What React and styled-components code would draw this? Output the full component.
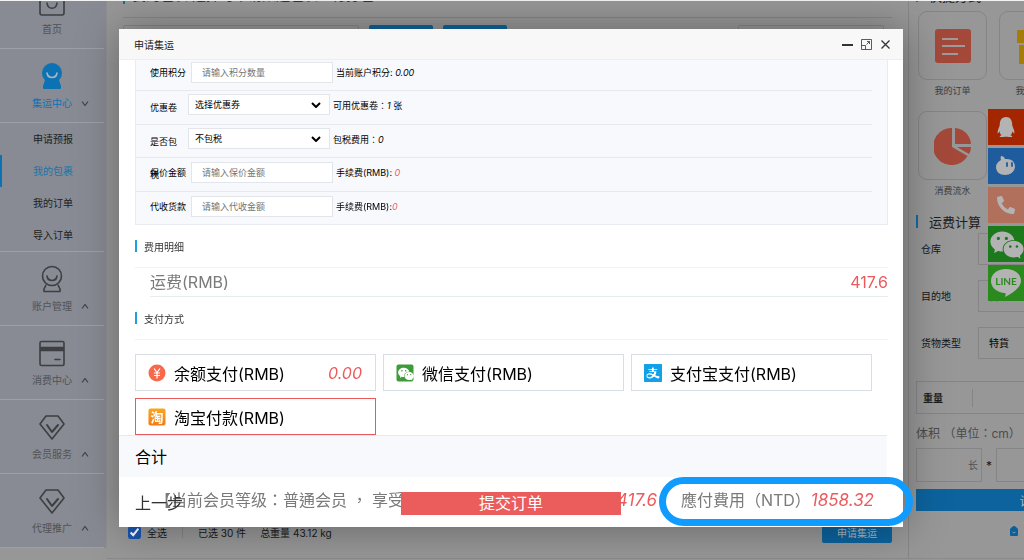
import React from "react";
import styled, { createGlobalStyle } from "styled-components";
import { FaQq, FaPhoneAlt } from "react-icons/fa";
import { AiFillAlipaySquare, AiFillWechat } from "react-icons/ai";

const FONT = `Inter, "Noto Sans CJK SC", sans-serif`;
const FONT_TC = `Inter, "Noto Sans CJK TC", "Noto Sans CJK SC", sans-serif`;

const Global = createGlobalStyle`
  *, *::before, *::after { box-sizing: border-box; }
  body { margin: 0; background: #fff; font-family: ${FONT}; font-size: 10px; color: #222; }
  button, input, select { font-family: inherit; margin: 0; }
  button { border: 0; padding: 0; background: none; cursor: pointer; }
  a { color: inherit; text-decoration: none; }
  ul { list-style: none; margin: 0; padding: 0; }
  h1, h2, h3, p { margin: 0; font-weight: 400; }
`;

const Page = styled.div`
  display: flex;
  height: 100vh;
  overflow: hidden;
  border-top: 1px solid #f2f2f2;
  background: #979797;
`;

/* ---------- sidebar ---------- */

const Sidebar = styled.nav`
  flex: 0 0 107px;
  align-self: flex-start;
  padding-right: 2px;
  background: #888b93;
  border-right: 1px solid #8f9197;
`;

const MenuItem = styled.a`
  display: flex;
  flex-direction: column;
  align-items: center;
  justify-content: flex-end;
  gap: 5px;
  height: ${(p) => (p.$cut ? 48 : 74)}px;
  padding-bottom: 11px;
  overflow: hidden;
  border-bottom: 1px solid #9da0a6;
  color: ${(p) => (p.$active ? "#0d72b3" : "#505256")};
  line-height: 16px;
`;

const MenuIcon = styled.svg`
  flex: none;
  width: 28px;
  height: 28px;
  fill: none;
  stroke: #3d3f42;
  stroke-width: 1.6;
  stroke-linejoin: round;
  stroke-linecap: round;
`;

const MenuLabel = styled.span`
  position: relative;
`;

const Caret = styled.svg`
  position: absolute;
  top: 6px;
  left: 49px;
  width: 8px;
  height: 5px;
  fill: none;
  stroke: #404246;
  stroke-width: 1.2;
`;

const SubMenu = styled.ul`
  border-bottom: 1px solid #9da0a6;
`;

const SubItem = styled.li`
  height: 32px;
  line-height: 32px;
  text-align: center;
  border-left: 2px solid ${(p) => (p.$active ? "#0d72b3" : "transparent")};
  color: ${(p) => (p.$active ? "#2274ad" : "#1c1d20")};
`;

/* ---------- page behind the dialog ---------- */

const Main = styled.main`
  flex: 1;
  min-width: 0;
  display: flex;
  flex-direction: column;
  margin-bottom: 1px;
  border-bottom: 1px solid #8b8b8b;
`;

const MainTitle = styled.h1`
  display: flex;
  gap: 7px;
  height: 17px;
  margin: 0 16px;
  border-bottom: 1px solid #868686;
  font-size: 14px;
  color: #333;
  overflow: hidden;
  &::before {
    content: "";
    width: 2px;
    height: 3px;
    background: #0d6ca8;
  }
  span {
    margin-top: -15px;
    line-height: 18px;
  }
`;

const Filters = styled.div`
  display: flex;
  align-items: flex-start;
  gap: 10px;
  padding: 7px 24px 0 16px;
`;

const Field = styled.input`
  width: ${(p) => p.$w}px;
  height: 26px;
  border: 1px solid #858585;
  border-radius: 2px;
  background: transparent;
  margin-left: ${(p) => (p.$end ? "auto" : 0)};
`;

const BlueButton = styled.button`
  flex: none;
  width: ${(p) => p.$w}px;
  height: ${(p) => p.$h}px;
  border-radius: 2px;
  background: #0c639d;
  color: #a9b8c2;
  font-size: 10px;
`;

const MainFooter = styled.div`
  display: flex;
  align-items: center;
  height: 52px;
  margin-top: auto;
  padding: 0 16px 0 21px;
  color: #17181a;
  font-size: 10px;
  label { display: flex; align-items: center; gap: 6px; }
  input { width: 13px; height: 13px; accent-color: #1a56b0; }
  button { margin-left: auto; }
`;

const Divider = styled.i`
  width: 1px;
  height: ${(p) => p.$h}px;
  margin: 0 15px;
  background: #858585;
`;

const Weight = styled.span`
  margin-left: 14px;
`;

/* ---------- right panel ---------- */

const Aside = styled.aside`
  flex: 0 0 116px;
  overflow: hidden;
  border-left: 1px solid #868686;
  margin-bottom: 1px;
  border-bottom: 1px solid #8b8b8b;
`;

const AsideInner = styled.div`
  width: 238px;
  padding-left: 7px;
`;

const AsideTitle = styled.h2`
  display: flex;
  align-items: center;
  gap: 11px;
  height: 20px;
  margin-top: ${(p) => (p.$cut ? -16 : 8)}px;
  font-size: 13px;
  color: #1d1e20;
  &::before {
    content: "";
    width: 2px;
    height: 13px;
    background: #0d6ca8;
  }
`;

const Shortcuts = styled.div`
  display: grid;
  grid-template-columns: 69px 69px;
  column-gap: 12px;
  row-gap: 8px;
  padding: 6px 0 0 2px;
`;

const Shortcut = styled.a`
  display: flex;
  flex-direction: column;
  align-items: center;
  gap: 2px;
  height: 92px;
  font-size: 9px;
  line-height: 18px;
  color: #3b3c3e;
`;

const ShortcutBox = styled.span`
  display: grid;
  place-items: center;
  width: 69px;
  height: 69px;
  border: 1px solid #858585;
  border-radius: 9px;
  svg { width: 38px; height: 38px; }
`;

const CalcForm = styled.div`
  padding-top: 2px;
`;

const CalcRow = styled.label`
  display: flex;
  align-items: center;
  justify-content: space-between;
  height: 31px;
  margin-bottom: 16px;
  padding-left: 5px;
  color: #141516;
`;

const CalcSelect = styled.select`
  appearance: none;
  width: 169px;
  height: 32px;
  padding: 0 10px;
  border: 1px solid #858585;
  border-radius: 0;
  background: transparent;
  font-size: 10px;
  font-weight: 500;
  color: #141516;
`;

const WeightBox = styled.label`
  display: flex;
  align-items: center;
  height: 33px;
  margin-top: 23px;
  padding-left: 6px;
  border: 1px solid #858585;
  font-weight: 700;
  color: #1d1e20;
  input { flex: 1; min-width: 0; border: 0; background: transparent; }
  i { margin: 0 0 0 29px; }
`;

const VolumeTitle = styled.h3`
  height: 34px;
  line-height: 40px;
  font-family: ${FONT_TC};
  font-size: 12px;
  color: #4a4b4d;
  white-space: nowrap;
`;

const Sizes = styled.div`
  display: flex;
  align-items: center;
  gap: 4px;
  color: #17181a;
  font-size: 12px;
`;

const SizeField = styled.input`
  width: 66px;
  height: 34px;
  padding: 0 3px;
  border: 1px solid #858585;
  background: transparent;
  text-align: right;
  font-size: 10px;
  &::placeholder { color: #505153; }
`;

const CalcButton = styled(BlueButton)`
  display: block;
  width: 100%;
  margin-top: 7px;
  border-radius: 0;
  font-size: 12px;
`;

const BagLine = styled.div`
  padding: 15px 0 0 94px;
  svg { display: block; width: 8px; height: 10px; }
`;

const Social = styled.div`
  position: fixed;
  top: 109px;
  right: 0;
  display: grid;
  gap: 3px;
`;

const SocialLink = styled.a`
  display: grid;
  place-items: center;
  width: 36px;
  height: 36px;
  background: ${(p) => p.$bg};
  color: #b3b3b3;
  overflow: hidden;
`;

/* ---------- dialog ---------- */

const Dialog = styled.section`
  position: fixed;
  inset: 29px 121px 33px 119px;
  display: flex;
  flex-direction: column;
  background: #fff;
  box-shadow: 1px 1px 40px rgba(0, 0, 0, 0.35);
`;

const DialogHead = styled.header`
  flex: none;
  display: flex;
  align-items: center;
  gap: 8px;
  height: 31px;
  padding: 0 12px 0 15px;
  background: #f8f8f8;
  border-bottom: 1px solid #eee;
  h2 { margin-right: auto; font-size: 10px; color: #222; }
  button { display: grid; width: 11px; height: 11px; }
  svg { width: 11px; height: 11px; fill: none; stroke: #333; }
`;

const DialogBody = styled.div`
  flex: 1;
  min-height: 0;
  overflow: hidden;
  padding: 0 15px 0 16px;
`;

const Options = styled.div`
  display: flex;
  flex-direction: column;
  height: 168px;
  margin-top: -3px;
  padding-right: 15px;
  background: #f7f9fd;
  border: 1px solid #e8ecf2;
`;

const OptionRow = styled.div`
  flex: 1;
  display: flex;
  align-items: flex-start;
  min-height: 0;
  padding-left: 14px;
  border-bottom: ${(p) => (p.$last ? 0 : 1)}px solid #e6e9ee;
  font-size: 9px;
  color: #000;
`;

const OptionLabel = styled.label`
  flex: none;
  width: ${(p) => (p.$narrow ? 35 : 38)}px;
  margin-right: 3px;
  line-height: ${(p) => (p.$narrow ? 33 : 29)}px;
  white-space: ${(p) => (p.$narrow ? "normal" : "nowrap")};
`;

const TextField = styled.input`
  width: 142px;
  height: 21px;
  margin-top: 4px;
  padding: 0 10px;
  border: 1px solid #e2e5ea;
  background: #fff;
  font-size: 9px;
  &::placeholder { color: #757575; opacity: 1; }
`;

const SelectWrap = styled.span`
  position: relative;
  margin-top: 3px;
  select {
    display: block;
    appearance: none;
    width: 142px;
    height: 21px;
    padding: 0 6px;
    border: 1px solid #e2e5ea;
    border-radius: 0;
    background: #fff;
    font-size: 9px;
    color: #000;
  }
  svg {
    position: absolute;
    top: 8px;
    right: 9px;
    width: 10px;
    height: 6px;
    fill: none;
    stroke: #000;
    stroke-width: 2;
    pointer-events: none;
  }
`;

const Note = styled.span`
  margin-left: 3px;
  font-family: ${FONT_TC};
  line-height: 29px;
  em { color: ${(p) => (p.$red ? "#f0595c" : "inherit")}; }
`;

const SectionTitle = styled.h3`
  display: flex;
  align-items: center;
  gap: 7px;
  height: 43px;
  border-bottom: 1px solid #f0f2f4;
  font-size: 10px;
  color: #333;
  &::before {
    content: "";
    width: 2px;
    height: 12px;
    background: #1e9fdf;
  }
`;

const FeeRow = styled.div`
  display: flex;
  justify-content: space-between;
  height: 29px;
  margin-left: 15px;
  border-bottom: 1px solid #e8eef0;
  font-size: 16px;
  line-height: 28px;
  color: #7a7a7a;
  strong { font-weight: 400; color: #ec5a5d; }
`;

const PayGrid = styled.div`
  display: grid;
  grid-template-columns: repeat(3, 1fr);
  gap: 7px;
  padding: 14px 16px 0 0;
`;

const PayOption = styled.label`
  display: flex;
  align-items: center;
  gap: 8px;
  height: 37px;
  padding: 0 13px 0 12px;
  border: 1px solid ${(p) => (p.$on ? "#e8595c" : "#d9dee6")};
  font-size: 16px;
  color: #000;
  svg { flex: none; width: 18px; height: 18px; }
  input { position: absolute; opacity: 0; pointer-events: none; }
  em { margin-left: auto; color: #ec5a5d; }
`;

const TotalBar = styled.div`
  flex: none;
  height: 42px;
  margin-right: 16px;
  padding-left: 16px;
  border-top: 1px solid #e6eaef;
  background: #f7f9fc;
  font-size: 16px;
  line-height: 42px;
  color: #000;
`;

const Actions = styled.footer`
  flex: none;
  position: relative;
  display: flex;
  align-items: flex-start;
  justify-content: flex-end;
  height: 50px;
  padding-right: 29px;
  font-family: ${FONT_TC};
  font-size: 16px;
  line-height: 47px;
  color: #7a7a7a;
  white-space: nowrap;
  em { font-size: 17px; color: #ec5a5d; }
`;

const Level = styled.span`
  margin-right: auto;
  padding-left: 36px;
`;

const Due = styled.span`
  position: relative;
  margin-left: 24px;
  &::after {
    content: "";
    position: absolute;
    inset: 0 -39px auto -22px;
    height: 49px;
    border: 7px solid #109cff;
    border-radius: 25px;
  }
`;

const Submit = styled.button`
  position: absolute;
  top: 15px;
  left: 50%;
  width: 220px;
  height: 23px;
  margin-left: -110px;
  background: #eb5c5d;
  color: #fff;
  font-size: 16px;
  line-height: 23px;
`;

const Back = styled.button`
  position: absolute;
  top: 15px;
  left: 16px;
  font-size: 16px;
  line-height: 23px;
  color: #333;
`;

/* ---------- drawings ---------- */

const BoxDrawing = () => (
  <MenuIcon viewBox="0 0 28 28" aria-hidden="true">
    <rect x="2" y="2" width="24" height="25" rx="2" />
    <path d="M9 15c1 7 9 7 10 0" />
  </MenuIcon>
);

const PersonFilled = () => (
  <MenuIcon viewBox="0 0 28 28" aria-hidden="true">
    <g fill="#0d72b3" stroke="none">
      <circle cx="14" cy="11" r="10" />
      <path d="M7 18h14l2 6v2q0 1-1 1H6q-1 0-1-1v-2z" />
    </g>
    <path d="M9 11c1 6 9 6 10 0" stroke="#a4b6c6" />
  </MenuIcon>
);

const PersonOutline = () => (
  <MenuIcon viewBox="0 0 28 28" aria-hidden="true">
    <circle cx="14" cy="11" r="9.500" />
    <path d="M9 11c1 6 9 6 10 0M8 20l-2 4v2.500h16V24l-2-4" />
  </MenuIcon>
);

const CardDrawing = () => (
  <MenuIcon viewBox="0 0 28 28" aria-hidden="true">
    <rect x="2" y="2.500" width="24" height="24" rx="1.500" />
    <path d="M2 10h24" strokeWidth="4.500" strokeLinecap="butt" />
    <path d="M17 20.500h5" />
  </MenuIcon>
);

const GemDrawing = () => (
  <MenuIcon viewBox="0 0 28 28" aria-hidden="true">
    <path d="M8 3h12l6 8-12 15L2 11z" />
    <path d="M9 12l5 7 6-7" strokeWidth="2" />
  </MenuIcon>
);

const ListDrawing = () => (
  <svg viewBox="0 0 38 38" aria-hidden="true">
    <rect x="1" y="2" width="36" height="34" rx="3" fill="#a4493a" />
    <path d="M8 12h16M8 19h23M8 27h16" stroke="#9b9b9b" strokeWidth="2.200" />
  </svg>
);

const GiftDrawing = () => (
  <svg viewBox="0 0 38 38" aria-hidden="true">
    <path d="M3 3h32q1 0 1 1v12H2V4q0-1 1-1zM4 18h30v18q0 1-1 1H5q-1 0-1-1z" fill="#a37c0a" />
  </svg>
);

const PieDrawing = () => (
  <svg viewBox="0 0 38 38" aria-hidden="true">
    <path d="M18 1a18.500 18.500 0 1 0 15.500 28L18 20z" fill="#a4493a" />
    <path d="M21 1a17 17 0 0 1 16 16H21zM23 20h14q0 4-2 7z" fill="#a4493a" />
  </svg>
);

const menu = [
  ["账户管理", PersonOutline],
  ["消费中心", CardDrawing],
  ["会员服务", GemDrawing],
  ["代理推广", GemDrawing],
];

const Arrow = () => (
  <svg viewBox="0 0 10 6" aria-hidden="true"><path d="M1 1l4 4 4-4" /></svg>
);

export default function App() {
  return (
    <>
      <Global />
      <Page>
        <Sidebar>
          <MenuItem href="#home" $cut>
            <BoxDrawing />
            <MenuLabel>首页</MenuLabel>
          </MenuItem>
          <MenuItem href="#center" $active>
            <PersonFilled />
            <MenuLabel>
              集运中心
              <Caret viewBox="0 0 8 5" aria-hidden="true"><path d="M1 .5l3 4 3-4" /></Caret>
            </MenuLabel>
          </MenuItem>
          <SubMenu>
            {["申请预报", "我的包裹", "我的订单", "导入订单"].map((t, i) => (
              <SubItem key={t} $active={i === 1}><a href="#sub">{t}</a></SubItem>
            ))}
          </SubMenu>
          {menu.map(([t, Icon]) => (
            <MenuItem key={t} href="#menu">
              <Icon />
              <MenuLabel>
                {t}
                <Caret viewBox="0 0 8 5" aria-hidden="true"><path d="M1 4.500l3-4 3 4" /></Caret>
              </MenuLabel>
            </MenuItem>
          ))}
        </Sidebar>

        <Main>
          <MainTitle><span>我的包裹 选择可申请集运包裹进行打包</span></MainTitle>
          <Filters>
            <Field $w={236} aria-label="搜索" />
            <BlueButton $w={64} $h={26} aria-label="查询" />
            <BlueButton $w={64} $h={26} aria-label="重置" />
            <Field $w={146} $end aria-label="筛选" />
          </Filters>
          <MainFooter>
            <label><input type="checkbox" defaultChecked />全选</label>
            <Divider $h={12} />
            <span>已选 30 件</span>
            <Weight>总重量 43.12 kg</Weight>
            <BlueButton $w={70} $h={22}>申请集运</BlueButton>
          </MainFooter>
        </Main>

        <Aside>
          <AsideInner>
            <AsideTitle $cut>快捷方式</AsideTitle>
            <Shortcuts>
              <Shortcut href="#orders"><ShortcutBox><ListDrawing /></ShortcutBox>我的订单</Shortcut>
              <Shortcut href="#parcels"><ShortcutBox><GiftDrawing /></ShortcutBox>我的包裹</Shortcut>
              <Shortcut href="#flow"><ShortcutBox><PieDrawing /></ShortcutBox>消费流水</Shortcut>
            </Shortcuts>
            <AsideTitle>运费计算</AsideTitle>
            <CalcForm>
              <CalcRow>仓库<CalcSelect /></CalcRow>
              <CalcRow>目的地<CalcSelect><option>台湾</option></CalcSelect></CalcRow>
              <CalcRow>货物类型<CalcSelect><option>特貨</option></CalcSelect></CalcRow>
            </CalcForm>
            <WeightBox>重量<Divider $h={18} /><input /></WeightBox>
            <VolumeTitle>体积 （单位：cm）</VolumeTitle>
            <Sizes>
              <SizeField placeholder="长" aria-label="长" />*
              <SizeField aria-label="宽" />
            </Sizes>
            <CalcButton $h={22}>计算</CalcButton>
            <BagLine>
              <svg viewBox="0 0 8 10" aria-hidden="true">
                <path d="M2 1q2-2 4 0l2 2v6q0 1-1 1H1q-1 0-1-1V3z" fill="#0c5f98" />
                <path d="M2.500 6q1.500 2 3 0" fill="none" stroke="#9ab" strokeWidth=".8" />
              </svg>
            </BagLine>
          </AsideInner>
        </Aside>
      </Page>

      <Social>
        <SocialLink href="#qq" $bg="#a32600" aria-label="QQ"><FaQq size={20} /></SocialLink>
        <SocialLink href="#wangwang" $bg="#1f5c9e" aria-label="旺旺">
          <svg width="22" height="22" viewBox="0 0 22 22" aria-hidden="true">
            <path d="M6 1q3 0 4 3 9-1 10 7c0 6-5 9-10 9S1 17 1 12q0-4 5-7-1-2 0-4z" fill="#b3b3b3" />
            <path d="M12 8v3M17 8v3" stroke="#1f5c9e" strokeWidth="1.800" strokeLinecap="round" />
          </svg>
        </SocialLink>
        <SocialLink href="#phone" $bg="#b0705c" aria-label="电话"><FaPhoneAlt size={18} /></SocialLink>
        <SocialLink href="#wechat" $bg="#1d7a1c" aria-label="微信"><AiFillWechat size={38} /></SocialLink>
        <SocialLink href="#line" $bg="#2b8a1e" aria-label="LINE">
          <svg width="32" height="30" viewBox="0 0 32 30" aria-hidden="true">
            <path d="M16 1C7 1 1 6 1 13c0 6 5 11 13 12 2 0 2 1 1 4 6-3 16-9 16-16C31 6 25 1 16 1z" fill="#b3b3b3" />
            <text x="16" y="17" textAnchor="middle" fontSize="10" fontWeight="700" fontFamily="Lato" fill="#2b8a1e">LINE</text>
          </svg>
        </SocialLink>
      </Social>

      <Dialog role="dialog" aria-labelledby="dialog-title">
        <DialogHead>
          <h2 id="dialog-title">申请集运</h2>
          <button aria-label="最小化">
            <svg viewBox="0 0 11 11"><path d="M0 6h11" strokeWidth="2" /></svg>
          </button>
          <button aria-label="最大化">
            <svg viewBox="0 0 11 11"><path d="M.5.5h10v10H.5zM.5 6.500h4v4M5.500 5.500l3-3M6 2.500h2.500V5" strokeWidth=".8" /></svg>
          </button>
          <button aria-label="关闭">
            <svg viewBox="0 0 11 11"><path d="M1.500 1.500l8 8M9.500 1.500l-8 8" strokeWidth="1.300" /></svg>
          </button>
        </DialogHead>

        <DialogBody>
          <Options>
            <OptionRow>
              <OptionLabel htmlFor="points">使用积分</OptionLabel>
              <TextField id="points" placeholder="请输入积分数量" />
              <Note>当前账户积分: <em>0.00</em></Note>
            </OptionRow>
            <OptionRow>
              <OptionLabel htmlFor="coupon" $narrow>优惠卷</OptionLabel>
              <SelectWrap>
                <select id="coupon"><option>选择优惠券</option></select>
                <Arrow />
              </SelectWrap>
              <Note>可用优惠卷：<em>1</em> 张</Note>
            </OptionRow>
            <OptionRow>
              <OptionLabel htmlFor="tax" $narrow>是否包税</OptionLabel>
              <SelectWrap>
                <select id="tax"><option>不包税</option></select>
                <Arrow />
              </SelectWrap>
              <Note>包税费用：<em>0</em></Note>
            </OptionRow>
            <OptionRow>
              <OptionLabel htmlFor="insured">保价金额</OptionLabel>
              <TextField id="insured" placeholder="请输入保价金额" />
              <Note $red>手续费(RMB): <em>0</em></Note>
            </OptionRow>
            <OptionRow $last>
              <OptionLabel htmlFor="cod">代收货款</OptionLabel>
              <TextField id="cod" placeholder="请输入代收金额" />
              <Note $red>手续费(RMB):<em>0</em></Note>
            </OptionRow>
          </Options>

          <SectionTitle>费用明细</SectionTitle>
          <FeeRow><span>运费(RMB)</span><strong>417.6</strong></FeeRow>

          <SectionTitle>支付方式</SectionTitle>
          <PayGrid>
            <PayOption>
              <input type="radio" name="pay" />
              <svg viewBox="0 0 18 18" aria-hidden="true">
                <circle cx="9" cy="9" r="8.500" fill="#f7694b" />
                <path d="M6 4.500l3 4 3-4M9 8.500v6M6 9h6M6 11.500h6" fill="none" stroke="#fff" strokeWidth="1.200" />
              </svg>
              余额支付(RMB)<em>0.00</em>
            </PayOption>
            <PayOption>
              <input type="radio" name="pay" />
              <svg viewBox="0 0 18 18" aria-hidden="true">
                <rect x=".5" y=".5" width="17" height="17" rx="2" fill="#3f9a38" />
                <AiFillWechat x="1" y="1" width="16" height="16" color="#fff" />
              </svg>
              微信支付(RMB)
            </PayOption>
            <PayOption>
              <input type="radio" name="pay" />
              <AiFillAlipaySquare viewBox="112 112 800 800" color="#12a0e8" aria-hidden="true" />
              支付宝支付(RMB)
            </PayOption>
            <PayOption $on>
              <input type="radio" name="pay" defaultChecked />
              <svg viewBox="0 0 18 18" aria-hidden="true">
                <defs>
                  <linearGradient id="tb" x1="0" y1="0" x2="0" y2="1">
                    <stop offset="0" stopColor="#f7a823" />
                    <stop offset="1" stopColor="#f77a12" />
                  </linearGradient>
                </defs>
                <rect x=".5" y=".5" width="17" height="17" rx="2" fill="url(#tb)" />
                <text x="9" y="14" textAnchor="middle" fontSize="13" fontWeight="700" fill="#fff">淘</text>
              </svg>
              淘宝付款(RMB)
            </PayOption>
          </PayGrid>
        </DialogBody>

        <TotalBar>合计</TotalBar>
        <Actions>
          <Level>【当前会员等级：普通会员 ， 享受</Level>
          <em>417.6</em>
          <Due>應付費用（NTD）<em>1858.32</em></Due>
          <Back>上一步</Back>
          <Submit>提交订单</Submit>
        </Actions>
      </Dialog>
    </>
  );
}
